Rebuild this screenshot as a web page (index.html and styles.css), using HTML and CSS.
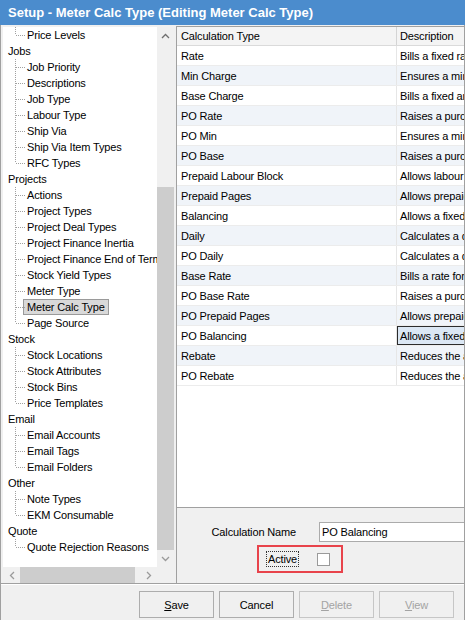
FILE: index.html
```html
<!DOCTYPE html>
<html>
<head>
<meta charset="utf-8">
<link rel="stylesheet" href="styles.css">
</head>
<body>
<div class="window">
  <div class="titlebar">Setup - Meter Calc Type (Editing Meter Calc Type)</div>
  <div class="main">
    <div class="left">
      <div class="tree">
        <div class="children">
          <div class="leaf"><span class="lbl">Price Levels</span></div>
        </div>
        <div class="root">Jobs</div>
        <div class="children">
          <div class="leaf"><span class="lbl">Job Priority</span></div>
          <div class="leaf"><span class="lbl">Descriptions</span></div>
          <div class="leaf"><span class="lbl">Job Type</span></div>
          <div class="leaf"><span class="lbl">Labour Type</span></div>
          <div class="leaf"><span class="lbl">Ship Via</span></div>
          <div class="leaf"><span class="lbl">Ship Via Item Types</span></div>
          <div class="leaf"><span class="lbl">RFC Types</span></div>
        </div>
        <div class="root">Projects</div>
        <div class="children">
          <div class="leaf"><span class="lbl">Actions</span></div>
          <div class="leaf"><span class="lbl">Project Types</span></div>
          <div class="leaf"><span class="lbl">Project Deal Types</span></div>
          <div class="leaf"><span class="lbl">Project Finance Inertia</span></div>
          <div class="leaf"><span class="lbl">Project Finance End of Term</span></div>
          <div class="leaf"><span class="lbl">Stock Yield Types</span></div>
          <div class="leaf"><span class="lbl">Meter Type</span></div>
          <div class="leaf"><span class="lbl selected">Meter Calc Type</span></div>
          <div class="leaf"><span class="lbl">Page Source</span></div>
        </div>
        <div class="root">Stock</div>
        <div class="children">
          <div class="leaf"><span class="lbl">Stock Locations</span></div>
          <div class="leaf"><span class="lbl">Stock Attributes</span></div>
          <div class="leaf"><span class="lbl">Stock Bins</span></div>
          <div class="leaf"><span class="lbl">Price Templates</span></div>
        </div>
        <div class="root">Email</div>
        <div class="children">
          <div class="leaf"><span class="lbl">Email Accounts</span></div>
          <div class="leaf"><span class="lbl">Email Tags</span></div>
          <div class="leaf"><span class="lbl">Email Folders</span></div>
        </div>
        <div class="root">Other</div>
        <div class="children">
          <div class="leaf"><span class="lbl">Note Types</span></div>
          <div class="leaf"><span class="lbl">EKM Consumable</span></div>
        </div>
        <div class="root">Quote</div>
        <div class="children">
          <div class="leaf"><span class="lbl">Quote Rejection Reasons</span></div>
        </div>
      </div>
      <div class="vscroll">
        <div class="sbtn"><svg width="9" height="6" viewBox="0 0 9 6"><polyline points="1,5 4.5,1.5 8,5" fill="none" stroke="#6e6e6e" stroke-width="1.3"/></svg></div>
        <div class="vtrack"><div class="thumb"></div></div>
        <div class="sbtn"><svg width="9" height="6" viewBox="0 0 9 6"><polyline points="1,1 4.5,4.5 8,1" fill="none" stroke="#9a9a9a" stroke-width="1.3"/></svg></div>
      </div>
      <div class="hscroll">
        <div class="sbtn"><svg width="6" height="9" viewBox="0 0 6 9"><polyline points="5,1 1.5,4.5 5,8" fill="none" stroke="#9a9a9a" stroke-width="1.3"/></svg></div>
        <div class="htrack"><div class="thumb"></div></div>
        <div class="sbtn"><svg width="6" height="9" viewBox="0 0 6 9"><polyline points="1,1 4.5,4.5 1,8" fill="none" stroke="#9a9a9a" stroke-width="1.3"/></svg></div>
      </div>
      <div class="corner"></div>
    </div>
    <div class="right">
      <div class="grid">
        <div class="row head"><div class="c1">Calculation Type</div><div class="c2">Description</div></div>
        <div class="row"><div class="c1">Rate</div><div class="c2">Bills a fixed rate per unit</div></div>
        <div class="row alt"><div class="c1">Min Charge</div><div class="c2">Ensures a minimum charge</div></div>
        <div class="row"><div class="c1">Base Charge</div><div class="c2">Bills a fixed amount</div></div>
        <div class="row alt"><div class="c1">PO Rate</div><div class="c2">Raises a purchase order</div></div>
        <div class="row"><div class="c1">PO Min</div><div class="c2">Ensures a minimum purchase</div></div>
        <div class="row alt"><div class="c1">PO Base</div><div class="c2">Raises a purchase order</div></div>
        <div class="row"><div class="c1">Prepaid Labour Block</div><div class="c2">Allows labour blocks</div></div>
        <div class="row alt"><div class="c1">Prepaid Pages</div><div class="c2">Allows prepaid pages</div></div>
        <div class="row"><div class="c1">Balancing</div><div class="c2">Allows a fixed balance</div></div>
        <div class="row alt"><div class="c1">Daily</div><div class="c2">Calculates a daily rate</div></div>
        <div class="row"><div class="c1">PO Daily</div><div class="c2">Calculates a daily rate</div></div>
        <div class="row alt"><div class="c1">Base Rate</div><div class="c2">Bills a rate for base</div></div>
        <div class="row"><div class="c1">PO Base Rate</div><div class="c2">Raises a purchase order</div></div>
        <div class="row alt"><div class="c1">PO Prepaid Pages</div><div class="c2">Allows prepaid pages</div></div>
        <div class="row"><div class="c1">PO Balancing</div><div class="c2 focus">Allows a fixed balance</div></div>
        <div class="row alt"><div class="c1">Rebate</div><div class="c2">Reduces the amount</div></div>
        <div class="row"><div class="c1">PO Rebate</div><div class="c2">Reduces the amount</div></div>
      </div>
      <div class="form">
        <div class="frow">
          <label class="flabel">Calculation Name</label>
          <div class="input">PO Balancing</div>
        </div>
        <div class="redbox">
          <span class="active-lbl">Active</span>
          <span class="check"></span>
        </div>
      </div>
    </div>
  </div>
  <div class="buttons">
    <div class="btn"><u>S</u>ave</div>
    <div class="btn">Cancel</div>
    <div class="btn disabled"><u>D</u>elete</div>
    <div class="btn disabled"><u>V</u>iew</div>
  </div>
</div>
</body>
</html>
```
FILE: styles.css
```css
* { box-sizing: border-box; }
html, body { margin: 0; padding: 0; }
body {
  width: 465px;
  height: 620px;
  overflow: hidden;
  background: #f0f0f0;
  font-family: "Liberation Sans", Arial, sans-serif;
  font-size: 11px;
  letter-spacing: -0.15px;
  color: #000;
}
.window {
  width: 465px;
  height: 620px;
  display: flex;
  flex-direction: column;
}
.titlebar {
  height: 25px;
  flex: none;
  background: #4b8ccd;
  color: #fff;
  font-weight: bold;
  font-size: 13px;
  letter-spacing: 0;
  line-height: 25px;
  padding-left: 8px;
  white-space: nowrap;
}
.main {
  height: 558px;
  flex: none;
  display: flex;
  padding-top: 1px;
  border-left: 1px solid #a0a0a0;
  border-right: 1px solid #a0a0a0;
}
.left {
  width: 175px;
  flex: none;
  display: grid;
  grid-template-columns: 154px 17px;
  grid-template-rows: 540px 17px;
  padding-left: 2px;
  background: #f0f0f0;
  border-top: 1px solid #f0f0f0;
}
.tree {
  background: #fff;
  overflow: hidden;
  white-space: nowrap;
}
.root {
  height: 16px;
  line-height: 16px;
  padding-left: 5px;
}
.children { position: relative; }
.children::before {
  content: "";
  position: absolute;
  left: 12px;
  top: 0;
  bottom: 8px;
  width: 1px;
  background-image: linear-gradient(to bottom, #a0a0a0 50%, transparent 50%);
  background-size: 1px 2px;
}
.leaf {
  height: 16px;
  line-height: 14px;
  display: flex;
  align-items: center;
  padding-left: 20px;
  position: relative;
}
.leaf::before {
  content: "";
  position: absolute;
  left: 13px;
  top: 8px;
  width: 9px;
  height: 1px;
  background-image: linear-gradient(to right, #a0a0a0 50%, transparent 50%);
  background-size: 2px 1px;
}
.lbl {
  padding: 0 3px;
  border: 1px solid transparent;
}
.lbl.selected {
  background: #d9d9d9;
  border-color: #9a9a9a;
}
.vscroll {
  display: flex;
  flex-direction: column;
  background: #f0f0f0;
}
.sbtn {
  width: 17px;
  height: 17px;
  flex: none;
  display: flex;
  align-items: center;
  justify-content: center;
}
.vtrack {
  flex: 1;
  display: flex;
  flex-direction: column;
  padding-top: 143px;
}
.vtrack .thumb { flex: 1; background: #cdcdcd; }
.hscroll {
  display: flex;
  background: #f0f0f0;
}
.htrack {
  flex: 1;
  display: flex;
  padding-right: 5px;
}
.htrack .thumb { flex: 1; background: #cdcdcd; }
.corner { background: #f0f0f0; }
.right {
  flex: 1;
  min-width: 0;
  display: flex;
  flex-direction: column;
  border-left: 1px solid #a0a0a0;
  border-top: 1px solid #a0a0a0;
}
.grid {
  height: 481px;
  flex: none;
  background: #fff;
  border-bottom: 1px solid #a0a0a0;
  overflow: hidden;
}
.row {
  display: flex;
  height: 20px;
  border-bottom: 1px solid #ececec;
  white-space: nowrap;
}
.row.alt { background: #f0f4f9; }
.row.head {
  height: 19px;
  background: #f4f4f4;
  border-bottom: 1px solid #dadada;
}
.c1 {
  width: 220px;
  flex: none;
  padding-left: 4px;
  padding-top: 1px;
  line-height: 18px;
  border-right: 1px solid #e6e6e6;
}
.c2 {
  width: 200px;
  flex: none;
  padding-left: 3px;
  padding-top: 1px;
  line-height: 18px;
  overflow: hidden;
}
.head .c1, .head .c2 { line-height: 18px; padding-top: 0; }
.head .c1 { border-right-color: #d4d4d4; }
.c2.focus {
  background: #dbe7f4;
  outline: 1px solid #2b2b2b;
  outline-offset: -1px;
}
.form {
  flex: 1;
  background: #f0f0f0;
  padding-top: 14px;
}
.frow {
  display: grid;
  grid-template-columns: 119px 1fr;
  column-gap: 23px;
  align-items: center;
}
.flabel { text-align: right; }
.input {
  height: 20px;
  line-height: 18px;
  background: #fff;
  border: 1px solid #ababab;
  border-right: none;
  padding-left: 2px;
}
.redbox {
  margin-top: 3px;
  margin-left: 80px;
  width: 86px;
  height: 28px;
  border: 2px solid #e8434b;
  display: flex;
  align-items: center;
  padding-left: 7px;
}
.active-lbl {
  border: 1px dotted #333;
  padding: 0 1px;
  line-height: 14px;
}
.check {
  margin-left: 18px;
  width: 13px;
  height: 13px;
  background: #fff;
  border: 1px solid #9a9a9a;
}
.buttons {
  flex: 1;
  display: flex;
  justify-content: flex-end;
  align-items: flex-start;
  gap: 5px;
  padding: 7px 10px 0 0;
  border-top: 1px solid #a0a0a0;
  box-shadow: inset 0 1px 0 #fff;
  border-left: 1px solid #a0a0a0;
  border-right: 1px solid #a0a0a0;
}
.btn {
  width: 75px;
  height: 27px;
  border: 1px solid #adadad;
  background: #f0f0f0;
  display: flex;
  align-items: center;
  justify-content: center;
  color: #000;
}
.btn.disabled {
  color: #a3a3a3;
  border-color: #c6c6c6;
}
```
